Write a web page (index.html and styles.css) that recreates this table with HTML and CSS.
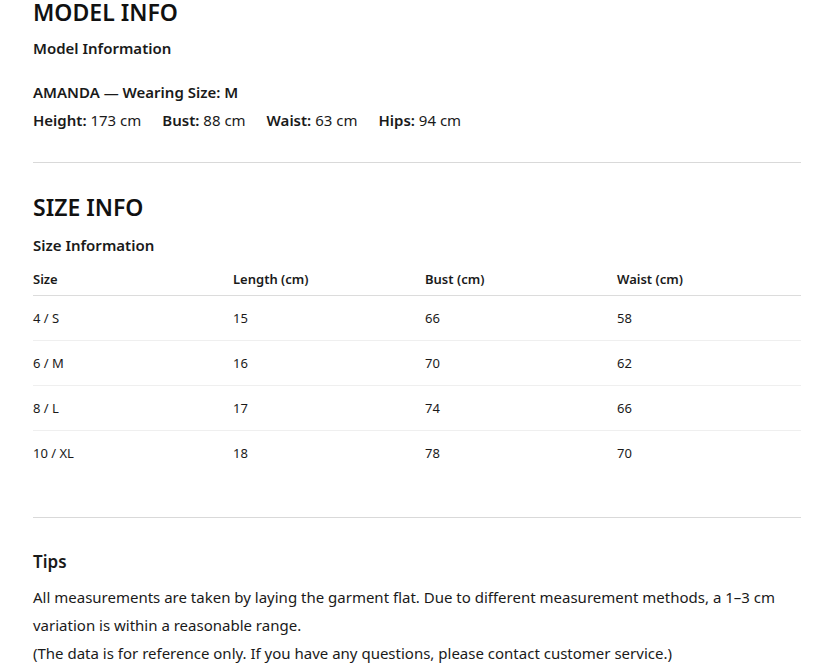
FILE: index.html
```html
<!DOCTYPE html>
<html lang="en">
<head>
<meta charset="utf-8">
<title>Model & Size Info</title>
<link rel="stylesheet" href="styles.css">
</head>
<body>
<main class="page">
  <section class="block model">
    <h2 class="title">MODEL INFO</h2>
    <h3 class="subtitle">Model Information</h3>
    <p class="model-name">AMANDA — Wearing Size: M</p>
    <div class="stats">
      <span class="stat"><b>Height:</b> 173 cm</span>
      <span class="stat"><b>Bust:</b> 88 cm</span>
      <span class="stat"><b>Waist:</b> 63 cm</span>
      <span class="stat"><b>Hips:</b> 94 cm</span>
    </div>
  </section>
  <hr class="divider">
  <section class="block size">
    <h2 class="title title-size">SIZE INFO</h2>
    <h3 class="subtitle">Size Information</h3>
    <table class="size-table">
      <colgroup>
        <col class="c1"><col class="c2"><col class="c3"><col class="c4">
      </colgroup>
      <thead>
        <tr><th>Size</th><th>Length (cm)</th><th>Bust (cm)</th><th>Waist (cm)</th></tr>
      </thead>
      <tbody>
        <tr><td>4 / S</td><td>15</td><td>66</td><td>58</td></tr>
        <tr><td>6 / M</td><td>16</td><td>70</td><td>62</td></tr>
        <tr><td>8 / L</td><td>17</td><td>74</td><td>66</td></tr>
        <tr><td>10 / XL</td><td>18</td><td>78</td><td>70</td></tr>
      </tbody>
    </table>
  </section>
  <hr class="divider divider-tips">
  <section class="block tips">
    <h3 class="tips-title">Tips</h3>
    <p class="tips-text">All measurements are taken by laying the garment flat. Due to different measurement methods, a 1–3 cm variation is within a reasonable range.<br>(The data is for reference only. If you have any questions, please contact customer service.)</p>
  </section>
</main>
</body>
</html>
```

FILE: styles.css
```css
* { box-sizing: border-box; }
html, body { margin: 0; padding: 0; background: #fff; }
body {
  font-family: "Noto Sans", "Open Sans", sans-serif;
  color: #1a1a1a;
}
.page {
  padding: 0 27px 0 33px;
}
.block { margin: 0; }
.title {
  margin: 0;
  font-size: 23px;
  font-weight: 600;
  line-height: 24px;
  color: #111;
}
.title-size {
  line-height: 30px;
}
.subtitle {
  margin: 13px 0 0;
  font-size: 15px;
  font-weight: 600;
  line-height: 22px;
}
.model-name {
  margin: 22px 0 0;
  font-size: 15px;
  font-weight: 650;
  line-height: 22px;
}
.stats {
  display: flex;
  gap: 21px;
  margin-top: 6px;
  font-size: 15px;
  line-height: 22px;
}
.stat b { font-weight: 600; }
.divider {
  border: 0;
  border-top: 1px solid #d9d9d9;
  margin: 31px 0 29px;
  height: 0;
}
.size .subtitle { margin-top: 12px; }
.size-table {
  width: 100%;
  border-collapse: collapse;
  table-layout: fixed;
  font-size: 13px;
  line-height: 18px;
}
.c1 { width: 200px; }
.c2 { width: 192px; }
.c3 { width: 192px; }
.c4 { width: 184px; }
.size-table th {
  text-align: left;
  font-weight: 600;
  padding: 14px 0 7px;
  border-bottom: 1px solid #dcdcdc;
}
.size-table td {
  padding: 13px 0;
  border-bottom: 1px solid #efefef;
}
.size-table tbody tr:last-child td { border-bottom: 0; }
.divider-tips { margin: 42px 0 0; }
.tips-title {
  margin: 32px 0 0;
  font-size: 17px;
  font-weight: 600;
  line-height: 24px;
}
.tips-text {
  margin: 9px 0 0;
  font-size: 15px;
  line-height: 28px;
}
```
